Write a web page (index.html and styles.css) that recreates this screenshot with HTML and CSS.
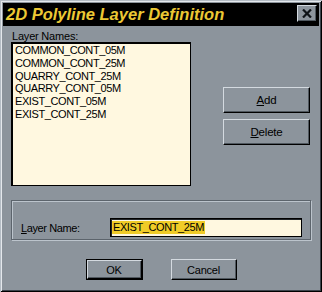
FILE: index.html
```html
<!DOCTYPE html>
<html>
<head>
<meta charset="utf-8">
<link rel="stylesheet" href="styles.css">
</head>
<body>
<div class="window">
  <div class="titlebar">
    <span class="title">2D Polyline Layer Definition</span>
    <span class="close"><svg width="10" height="9" viewBox="0 0 10 9"><path d="M1 0.5 L9 8.5 M9 0.5 L1 8.5" stroke="#101418" stroke-width="2.2" fill="none"/></svg></span>
  </div>
  <div class="content">
    <div class="label">Layer Names:</div>
    <div class="main">
      <div class="list">
        <div class="item">COMMON_CONT_05M</div>
        <div class="item">COMMON_CONT_25M</div>
        <div class="item">QUARRY_CONT_25M</div>
        <div class="item">QUARRY_CONT_05M</div>
        <div class="item">EXIST_CONT_05M</div>
        <div class="item">EXIST_CONT_25M</div>
      </div>
      <div class="side">
        <div class="btn side-btn"><u>A</u>dd</div>
        <div class="btn side-btn"><u>D</u>elete</div>
      </div>
    </div>
    <div class="group">
      <span class="glabel"><u>L</u>ayer Name:</span>
      <div class="input"><span class="sel">EXIST_CONT_25M</span></div>
    </div>
    <div class="actions">
      <div class="default"><div class="btn ok">OK</div></div>
      <div class="btn cancel">Cancel</div>
    </div>
  </div>
</div>
</body>
</html>
```

FILE: styles.css
```css
html, body {
  margin: 0;
  padding: 0;
  background: #8c949c;
}
body {
  width: 322px;
  height: 292px;
  overflow: hidden;
  font-family: "Liberation Sans", Arial, sans-serif;
  font-size: 11px;
  color: #000;
}
.window {
  box-sizing: border-box;
  width: 322px;
  height: 292px;
  padding: 3px;
  background: #8c949c;
  box-shadow: inset 1px 1px #b4bcc4, inset -1px -1px #000, inset 2px 2px #e4e8ec, inset -2px -2px #3c444c;
}
.titlebar {
  height: 23px;
  background: #000;
  display: flex;
  justify-content: space-between;
  align-items: flex-start;
  padding: 0 2px 0 3px;
}
.title {
  font-weight: bold;
  font-style: italic;
  font-size: 16.5px;
  line-height: 23px;
  color: #ecc834;
  white-space: nowrap;
}
.close {
  box-sizing: border-box;
  margin-top: 2px;
  width: 20px;
  height: 17px;
  background: #8c949c;
  border-top: 1px solid #d4dae0;
  border-left: 1px solid #d4dae0;
  border-right: 1px solid #000;
  border-bottom: 1px solid #000;
  box-shadow: inset -1px -1px #50585f;
  display: flex;
  align-items: center;
  justify-content: center;
}
.close svg { display: block; }
.content {
  padding: 0 8px;
}
.label {
  margin-top: 4px;
  line-height: 12px;
  padding-left: 1px;
  letter-spacing: -0.2px;
}
.main {
  display: flex;
}
.list {
  box-sizing: border-box;
  width: 180px;
  height: 144px;
  background: #fff8e0;
  border: 1px solid #000;
  box-shadow: inset 1px 1px #000;
  padding: 1px 0 0 3px;
}
.item {
  line-height: 12.8px;
  letter-spacing: -0.4px;
  white-space: nowrap;
}
.side {
  margin-left: 32px;
  margin-top: 45px;
  display: flex;
  flex-direction: column;
  gap: 6px;
}
.btn {
  box-sizing: border-box;
  background: #8c949c;
  border-top: 1px solid #d4dae0;
  border-left: 1px solid #d4dae0;
  border-right: 1px solid #000;
  border-bottom: 1px solid #000;
  box-shadow: inset -1px -1px #50585f;
  display: flex;
  align-items: center;
  justify-content: center;
  letter-spacing: -0.2px;
}
.side-btn {
  width: 87px;
  height: 26px;
  font-size: 11.5px;
}
.group {
  box-sizing: border-box;
  margin-top: 14px;
  width: 300px;
  height: 40px;
  border: 1px solid #5c646c;
  box-shadow: inset 1px 1px #bcc4cc, 1px 1px #bcc4cc;
  display: flex;
  align-items: center;
  padding: 17px 8px 2px 9px;
}
.glabel {
  width: 89px;
  flex: none;
  letter-spacing: -0.4px;
  font-size: 11px;
}
.input {
  box-sizing: border-box;
  flex: 1;
  height: 19px;
  background: #fff8e0;
  border: 1px solid #000;
  box-shadow: inset 1px 1px #202428;
  display: flex;
  align-items: center;
  padding-left: 1px;
}
.sel {
  background: #f0cc28;
  line-height: 13px;
  letter-spacing: -0.4px;
  padding: 0 1px;
}
.actions {
  margin-top: 19px;
  display: flex;
  justify-content: center;
  gap: 28px;
}
.default {
  box-sizing: border-box;
  width: 57px;
  height: 21px;
  border: 1px solid #000;
}
.ok {
  width: 55px;
  height: 19px;
  font-size: 11px;
}
.cancel {
  width: 66px;
  height: 21px;
  font-size: 11px;
}
```
